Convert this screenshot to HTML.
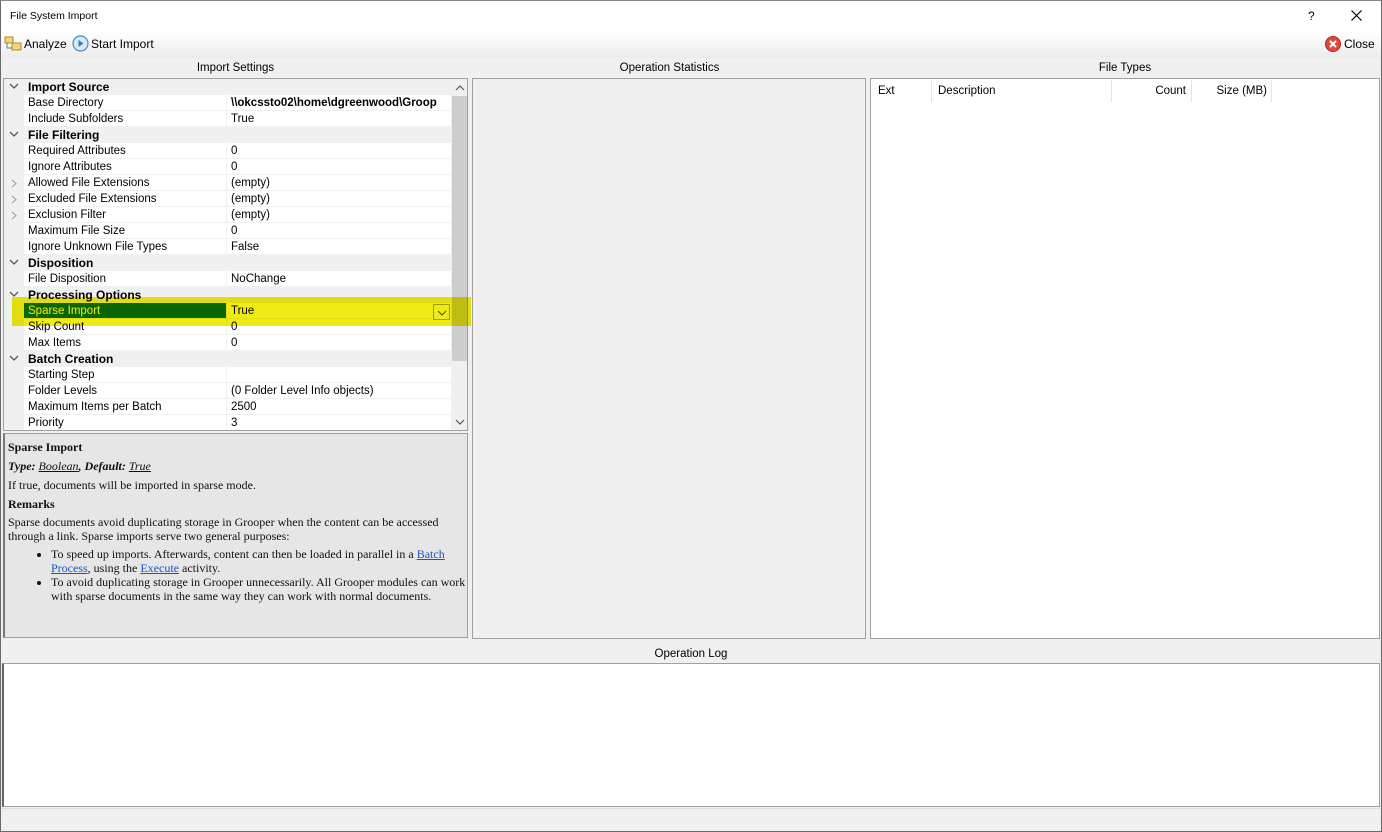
<!DOCTYPE html>
<html><head><meta charset="utf-8"><style>
*{box-sizing:border-box;margin:0;padding:0}
body{width:1382px;height:832px;overflow:hidden;background:#f0f0f0;font-family:"Liberation Sans",sans-serif;font-size:11.5px;color:#000;position:relative}
.abs{position:absolute}
.win{left:0;top:0;width:1382px;height:832px;border:1px solid #6a6a6a;border-top-color:#888}
.title{left:1px;top:1px;width:1380px;height:31px;background:#fff}
.tb{left:1px;top:32px;width:1380px;height:26px;background:linear-gradient(#fff,#ececec)}
.hdr{font-size:11.5px;text-align:center}
.grid{left:3px;top:78px;width:465px;height:353px;background:#fff;border:1px solid #a0a0a0;overflow:hidden}
.row{position:absolute;left:0;height:16px;width:448px;border-bottom:1px solid #f0f0f0;line-height:17px}
.row .n{position:absolute;left:20px;width:202px;padding-left:4px;height:15px}
.row .v{position:absolute;left:222px;width:226px;padding-left:4px;border-left:1px solid #f0f0f0;height:16px}
.cat{background:#f0f0f0;font-weight:bold;font-size:12px}
.gut{position:absolute;left:0;top:0;width:20px;height:353px;background:#f0f0f0}
.chev{position:absolute;left:5px;top:4px}
.help{left:3px;top:433px;width:465px;height:205px;background:#e6e6e6;border:1px solid #a0a0a0;border-left:2px solid #777;font-family:"Liberation Serif",serif;font-size:12px;padding:6px 0 0 3px;line-height:14px;color:#111}
.help a{color:#1a55c0;text-decoration:underline}
</style></head><body>
<div class="abs win"></div>
<div class="abs title"></div>
<div class="abs" style="left:10px;top:10px;font-size:10.5px">File System Import</div>
<div class="abs" style="left:1308px;top:9px;font-size:12px">?</div>
<svg class="abs" style="left:1351px;top:10px" width="11" height="11"><path d="M0.5 0.5l10 10M10.5 0.5l-10 10" stroke="#000" stroke-width="1.2"/></svg>
<div class="abs tb"></div>
<svg class="abs" style="left:4px;top:36px" width="18" height="16"><rect x="1" y="1" width="8" height="6" fill="#f4d47a" stroke="#b08a30"/><rect x="8" y="7" width="9" height="7" fill="#f4d47a" stroke="#b08a30"/><path d="M3 7v5h5" stroke="#777" fill="none"/></svg>
<div class="abs" style="left:24px;top:37px;font-size:12px">Analyze</div>
<svg class="abs" style="left:72px;top:35px" width="17" height="17"><circle cx="8.5" cy="8.5" r="7.5" fill="#dbe9f8" stroke="#4a86c8" stroke-width="1.2"/><path d="M6.5 5l5 3.5-5 3.5z" fill="#3a78c0"/></svg>
<div class="abs" style="left:91px;top:37px;font-size:12px">Start Import</div>
<svg class="abs" style="left:1325px;top:36px" width="16" height="16"><circle cx="8" cy="8" r="7.5" fill="#e0483d" stroke="#b02a20"/><path d="M5 5l6 6M11 5l-6 6" stroke="#fff" stroke-width="2"/></svg>
<div class="abs" style="left:1344px;top:37px;font-size:12px">Close</div>

<div class="abs hdr" style="left:3px;top:62px;width:465px">Import Settings</div>
<div class="abs hdr" style="left:472px;top:62px;width:395px">Operation Statistics</div>
<div class="abs hdr" style="left:870px;top:62px;width:510px">File Types</div>

<div class="abs grid">
<div class="gut"></div>
<div class="row cat" style="top:0"><svg class="chev" width="10" height="7"><path d="M1 1l4 4 4-4" stroke="#555" fill="none" stroke-width="1.3"/></svg><span class="n">Import Source</span></div>
<div class="row" style="top:16px"><span class="n">Base Directory</span><span class="v" style="font-weight:bold;white-space:nowrap;overflow:hidden">\\okcssto02\home\dgreenwood\Groop</span></div>
<div class="row" style="top:32px"><span class="n">Include Subfolders</span><span class="v">True</span></div>
<div class="row cat" style="top:48px"><svg class="chev" width="10" height="7"><path d="M1 1l4 4 4-4" stroke="#555" fill="none" stroke-width="1.3"/></svg><span class="n">File Filtering</span></div>
<div class="row" style="top:64px"><span class="n">Required Attributes</span><span class="v">0</span></div>
<div class="row" style="top:80px"><span class="n">Ignore Attributes</span><span class="v">0</span></div>
<div class="row" style="top:96px"><svg class="chev" style="left:7px" width="6" height="9"><path d="M1 1l4 3.5-4 3.5" stroke="#999" fill="none"/></svg><span class="n">Allowed File Extensions</span><span class="v">(empty)</span></div>
<div class="row" style="top:112px"><svg class="chev" style="left:7px" width="6" height="9"><path d="M1 1l4 3.5-4 3.5" stroke="#999" fill="none"/></svg><span class="n">Excluded File Extensions</span><span class="v">(empty)</span></div>
<div class="row" style="top:128px"><svg class="chev" style="left:7px" width="6" height="9"><path d="M1 1l4 3.5-4 3.5" stroke="#999" fill="none"/></svg><span class="n">Exclusion Filter</span><span class="v">(empty)</span></div>
<div class="row" style="top:144px"><span class="n">Maximum File Size</span><span class="v">0</span></div>
<div class="row" style="top:160px"><span class="n">Ignore Unknown File Types</span><span class="v">False</span></div>
<div class="row cat" style="top:176px"><svg class="chev" width="10" height="7"><path d="M1 1l4 4 4-4" stroke="#555" fill="none" stroke-width="1.3"/></svg><span class="n">Disposition</span></div>
<div class="row" style="top:192px"><span class="n">File Disposition</span><span class="v">NoChange</span></div>
<div class="row cat" style="top:208px"><svg class="chev" width="10" height="7"><path d="M1 1l4 4 4-4" stroke="#555" fill="none" stroke-width="1.3"/></svg><span class="n">Processing Options</span></div>
<div class="row" style="top:224px"><span class="n" style="background:#0a6e12;color:#fff">Sparse Import</span><span class="v">True</span></div>
<div class="row" style="top:240px"><span class="n">Skip Count</span><span class="v">0</span></div>
<div class="row" style="top:256px"><span class="n">Max Items</span><span class="v">0</span></div>
<div class="row cat" style="top:272px"><svg class="chev" width="10" height="7"><path d="M1 1l4 4 4-4" stroke="#555" fill="none" stroke-width="1.3"/></svg><span class="n">Batch Creation</span></div>
<div class="row" style="top:288px"><span class="n">Starting Step</span><span class="v"></span></div>
<div class="row" style="top:304px"><span class="n">Folder Levels</span><span class="v">(0 Folder Level Info objects)</span></div>
<div class="row" style="top:320px"><span class="n">Maximum Items per Batch</span><span class="v">2500</span></div>
<div class="row" style="top:336px"><span class="n">Priority</span><span class="v">3</span></div>
<div class="abs" style="left:429px;top:225px;width:17px;height:16px;border:1px solid #aaa;background:#fff"></div>
<svg class="abs" style="left:433px;top:231px" width="10" height="6"><path d="M1 1l4 4 4-4" stroke="#555" fill="none"/></svg>
<div class="abs" style="left:447px;top:0;width:17px;height:353px;background:#f0f0f0"></div>
<div class="abs" style="left:448px;top:17px;width:15px;height:265px;background:#cdcdcd"></div>
<svg class="abs" style="left:451px;top:6px" width="10" height="6"><path d="M1 5l4-4 4 4" stroke="#555" fill="none" stroke-width="1.2"/></svg>
<svg class="abs" style="left:451px;top:340px" width="10" height="6"><path d="M1 1l4 4 4-4" stroke="#555" fill="none" stroke-width="1.2"/></svg>
</div>
<div class="abs" style="left:12px;top:297px;width:459px;height:29px;background:#eeec14;mix-blend-mode:multiply"></div>

<div class="abs help">
<div style="font-weight:bold">Sparse Import</div>
<div style="margin-top:5px;font-style:italic;font-weight:bold">Type: <u style="font-weight:normal">Boolean</u>, Default: <u style="font-weight:normal">True</u></div>
<div style="margin-top:5px">If true, documents will be imported in sparse mode.</div>
<div style="margin-top:5px;font-weight:bold">Remarks</div>
<div style="margin-top:4px;width:450px">Sparse documents avoid duplicating storage in Grooper when the content can be accessed through a link. Sparse imports serve two general purposes:</div>
<ul style="margin:4px 0 0 43px">
<li>To speed up imports. Afterwards, content can then be loaded in parallel in a <a>Batch Process</a>, using the <a>Execute</a> activity.</li>
<li>To avoid duplicating storage in Grooper unnecessarily. All Grooper modules can work with sparse documents in the same way they can work with normal documents.</li>
</ul>
</div>

<div class="abs" style="left:472px;top:78px;width:394px;height:561px;border:1px solid #a0a0a0;background:#f0f0f0"></div>
<div class="abs" style="left:870px;top:78px;width:510px;height:561px;border:1px solid #a0a0a0;background:#fff"></div>
<div class="abs" style="left:878px;top:85px">Ext</div>
<div class="abs" style="left:931px;top:80px;width:1px;height:22px;background:#e5e5e5"></div>
<div class="abs" style="left:938px;top:85px">Description</div>
<div class="abs" style="left:1111px;top:80px;width:1px;height:22px;background:#e5e5e5"></div>
<div class="abs" style="left:1111px;top:85px;width:75px;text-align:right">Count</div>
<div class="abs" style="left:1191px;top:80px;width:1px;height:22px;background:#e5e5e5"></div>
<div class="abs" style="left:1191px;top:85px;width:76px;text-align:right">Size (MB)</div>
<div class="abs" style="left:1271px;top:80px;width:1px;height:22px;background:#e5e5e5"></div>

<div class="abs hdr" style="left:0;top:648px;width:1382px">Operation Log</div>
<div class="abs" style="left:2px;top:663px;width:1378px;height:144px;background:#fff;border:1px solid #a0a0a0;border-left:2px solid #666"></div>
<div class="abs" style="left:2px;top:808px;width:1378px;height:1px;background:#ddd"></div>
</body></html>
